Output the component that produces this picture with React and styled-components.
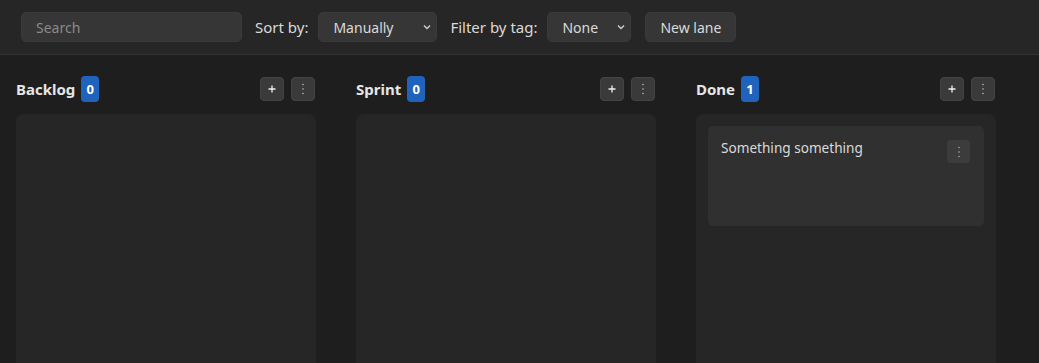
import React from "react";
import styled, { createGlobalStyle } from "styled-components";

const Global = createGlobalStyle`
  html, body { margin: 0; padding: 0; background: #1e1e1e; }
  body { font-family: "Noto Sans", "Open Sans", sans-serif; color: #dadada; overflow: hidden; }
  * { box-sizing: border-box; }
`;

const Page = styled.div`
  width: 1039px;
  height: 363px;
  background: #1e1e1e;
  display: flex;
  flex-direction: column;
`;

const Toolbar = styled.div`
  height: 55px;
  background: #262626;
  border-bottom: 1px solid #333;
  display: flex;
  align-items: center;
  padding: 0 21px;
  gap: 13px;
`;

const Search = styled.input`
  width: 221px;
  height: 30px;
  background: #363636;
  border: 1px solid #3a3a3a;
  border-radius: 5px;
  color: #dadada;
  font-family: inherit;
  font-size: 14px;
  padding: 0 14px;
  outline: none;
  &::placeholder { color: #8a8a8a; }
`;

const Label = styled.span`
  font-size: 15px;
  color: #dadada;
  margin-right: -4px;
`;

const SelectBox = styled.div`
  width: ${(p) => p.$w}px;
  height: 30px;
  margin-left: 1px;
  background: #363636;
  border: 1px solid #3a3a3a;
  border-radius: 5px;
  display: flex;
  align-items: center;
  justify-content: space-between;
  padding: 0 4px 0 14px;
  font-size: 14px;
  color: #dadada;
`;

const Button = styled.button`
  height: 30px;
  margin-left: 1px;
  background: #363636;
  border: 1px solid #3a3a3a;
  border-radius: 5px;
  color: #dadada;
  font-family: inherit;
  font-size: 14px;
  padding: 0 14px;
`;

const Board = styled.div`
  display: flex;
  gap: 40px;
  padding: 21px 16px 0;
  flex: 1;
  min-height: 0;
`;

const Lane = styled.div`
  width: 300px;
  display: flex;
  flex-direction: column;
`;

const LaneHeader = styled.div`
  height: 26px;
  display: flex;
  align-items: center;
  gap: 6px;
  margin-bottom: 12px;
`;

const LaneTitle = styled.span`
  font-size: 15px;
  font-weight: 700;
  color: #e6e6e6;
`;

const Badge = styled.span`
  min-width: 18px;
  height: 26px;
  background: #1f63bd;
  border-radius: 4px;
  color: #fff;
  font-size: 13px;
  font-weight: 700;
  display: flex;
  align-items: center;
  justify-content: center;
  padding: 0 4px;
`;

const Spacer = styled.div`
  flex: 1;
`;

const IconButton = styled.button`
  width: 24px;
  height: 24px;
  padding: 0;
  background: #3a3a3a;
  border: 1px solid #444;
  border-radius: 4px;
  display: flex;
  align-items: center;
  justify-content: center;
  margin-left: ${(p) => p.$ml || 0}px;
  margin-right: ${(p) => p.$mr || 0}px;
`;

const LaneBody = styled.div`
  flex: 1;
  background: #262626;
  border-radius: 8px 8px 0 0;
  padding: 12px;
  display: flex;
  flex-direction: column;
`;

const Card = styled.div`
  height: 100px;
  background: #303030;
  border-radius: 5px;
  padding: 12px 14px 0 13px;
  display: flex;
  align-items: flex-start;
  justify-content: space-between;
`;

const CardText = styled.span`
  font-size: 13.6px;
  color: #dadada;
  margin-top: 0;
`;

const CardMenu = styled.button`
  width: 23px;
  height: 23px;
  margin-top: 2px;
  padding: 0;
  background: #3c3c3c;
  border: none;
  border-radius: 4px;
  display: flex;
  align-items: center;
  justify-content: center;
`;

const Chevron = () => (
  <svg width="10" height="10" viewBox="0 0 10 10">
    <path d="M2 3.5 L5 6.5 L8 3.5" fill="none" stroke="#cfcfcf" strokeWidth="1.4" />
  </svg>
);

const Plus = () => (
  <svg width="10" height="10" viewBox="0 0 10 10">
    <path d="M5 1.5 V8.5 M1.5 5 H8.5" stroke="#f0f0f0" strokeWidth="1.3" />
  </svg>
);

const Dots = ({ color = "#bbb" }) => (
  <svg width="4" height="12" viewBox="0 0 4 12">
    <circle cx="2" cy="1.5" r="0.8" fill={color} />
    <circle cx="2" cy="6" r="0.8" fill={color} />
    <circle cx="2" cy="10.5" r="0.8" fill={color} />
  </svg>
);

const lanes = [
  { title: "Backlog", cards: [] },
  { title: "Sprint", cards: [] },
  { title: "Done", cards: ["Something something"] },
];

export default function App() {
  return (
    <Page>
      <Global />
      <Toolbar>
        <Search placeholder="Search" />
        <Label>Sort by:</Label>
        <SelectBox $w={119}>
          Manually
          <Chevron />
        </SelectBox>
        <Label>Filter by tag:</Label>
        <SelectBox $w={84}>
          None
          <Chevron />
        </SelectBox>
        <Button>New lane</Button>
      </Toolbar>
      <Board>
        {lanes.map((lane) => (
          <Lane key={lane.title}>
            <LaneHeader>
              <LaneTitle>{lane.title}</LaneTitle>
              <Badge>{lane.cards.length}</Badge>
              <Spacer />
              <IconButton>
                <Plus />
              </IconButton>
              <IconButton $ml={1} $mr={1}>
                <Dots />
              </IconButton>
            </LaneHeader>
            <LaneBody>
              {lane.cards.map((c) => (
                <Card key={c}>
                  <CardText>{c}</CardText>
                  <CardMenu>
                    <Dots color="#aaa" />
                  </CardMenu>
                </Card>
              ))}
            </LaneBody>
          </Lane>
        ))}
      </Board>
    </Page>
  );
}
